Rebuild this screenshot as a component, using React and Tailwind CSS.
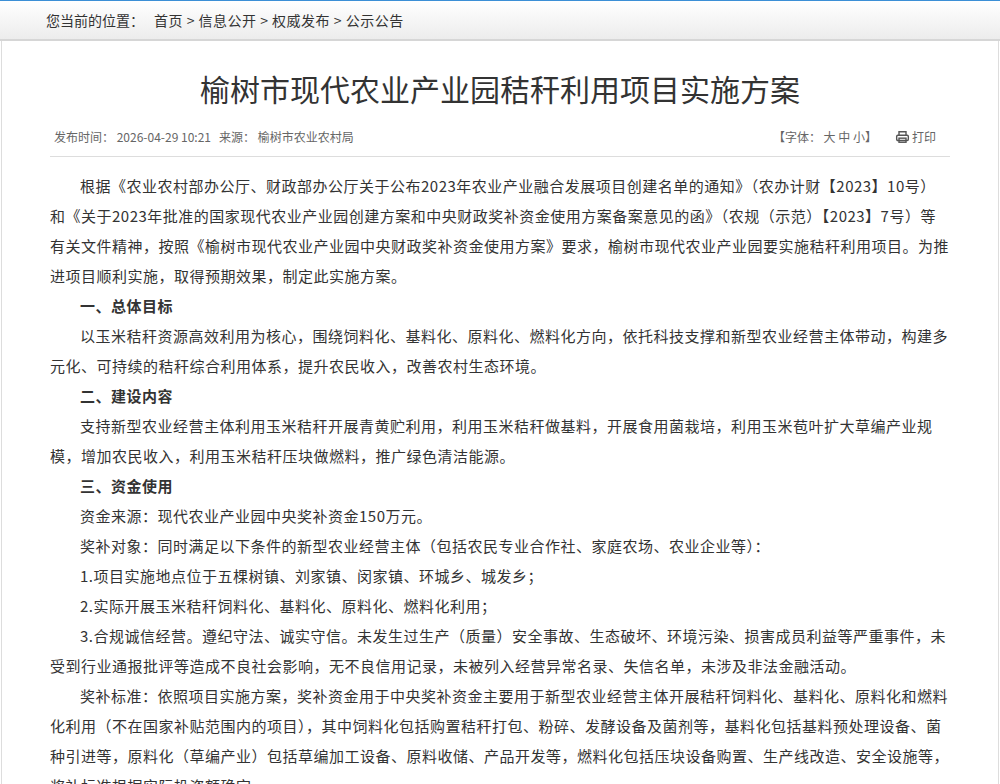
import React from "react";

const paras = [
  { t: "根据《农业农村部办公厅、财政部办公厅关于公布2023年农业产业融合发展项目创建名单的通知》（农办计财【2023】10号）和《关于2023年批准的国家现代农业产业园创建方案和中央财政奖补资金使用方案备案意见的函》（农规（示范）【2023】7号）等有关文件精神，按照《榆树市现代农业产业园中央财政奖补资金使用方案》要求，榆树市现代农业产业园要实施秸秆利用项目。为推进项目顺利实施，取得预期效果，制定此实施方案。" },
  { t: "一、总体目标", b: true },
  { t: "以玉米秸秆资源高效利用为核心，围绕饲料化、基料化、原料化、燃料化方向，依托科技支撑和新型农业经营主体带动，构建多元化、可持续的秸秆综合利用体系，提升农民收入，改善农村生态环境。" },
  { t: "二、建设内容", b: true },
  { t: "支持新型农业经营主体利用玉米秸秆开展青黄贮利用，利用玉米秸秆做基料，开展食用菌栽培，利用玉米苞叶扩大草编产业规模，增加农民收入，利用玉米秸秆压块做燃料，推广绿色清洁能源。" },
  { t: "三、资金使用", b: true },
  { t: "资金来源：现代农业产业园中央奖补资金150万元。" },
  { t: "奖补对象：同时满足以下条件的新型农业经营主体（包括农民专业合作社、家庭农场、农业企业等）：" },
  { t: "1.项目实施地点位于五棵树镇、刘家镇、闵家镇、环城乡、城发乡；" },
  { t: "2.实际开展玉米秸秆饲料化、基料化、原料化、燃料化利用；" },
  { t: "3.合规诚信经营。遵纪守法、诚实守信。未发生过生产（质量）安全事故、生态破坏、环境污染、损害成员利益等严重事件，未受到行业通报批评等造成不良社会影响，无不良信用记录，未被列入经营异常名录、失信名单，未涉及非法金融活动。" },
  { t: "奖补标准：依照项目实施方案，奖补资金用于中央奖补资金主要用于新型农业经营主体开展秸秆饲料化、基料化、原料化和燃料化利用（不在国家补贴范围内的项目），其中饲料化包括购置秸秆打包、粉碎、发酵设备及菌剂等，基料化包括基料预处理设备、菌种引进等，原料化（草编产业）包括草编加工设备、原料收储、产品开发等，燃料化包括压块设备购置、生产线改造、安全设施等，奖补标准根据实际投资额确定。" },
];

export default function App() {
  return (
    <div className="w-[1000px] h-[784px] overflow-hidden bg-white border-t border-[#3c8fd6]" style={{ fontFamily: '"Microsoft YaHei","Noto Sans CJK SC",sans-serif' }}>
      <div className="h-[40px] bg-gradient-to-b from-white to-[#ececec] border-b-2 border-[#d6d6d6] flex items-center pl-[46px] text-[14px] text-[#333]">
        您当前的位置：<span className="ml-[10px] tracking-[0.5px]">首页 &gt; 信息公开 &gt; 权威发布 &gt; 公示公告</span>
      </div>
      <div className="mx-[1px] border-x border-[#ddd] h-full">
        <div className="w-[900px] mx-auto">
          <h1 className="text-center text-[30px] text-[#333] pt-[27px] leading-[40px]">榆树市现代农业产业园秸秆利用项目实施方案</h1>
          <div className="flex justify-between items-center mt-[20px] pb-[10px] border-b border-[#ddd] text-[12px] text-[#666] px-[4px]">
            <div>发布时间：&nbsp;2026-04-29 10:21&nbsp;&nbsp;&nbsp;来源：&nbsp;榆树市农业农村局</div>
            <div className="flex items-center gap-[18px] pr-[10px]">
              <span>【字体：&nbsp;大 中 小】</span>
              <span className="flex items-center gap-[2px]">
                <svg width="15" height="14" viewBox="0 0 24 24" fill="none" stroke="#555" strokeWidth="2.4"><path d="M6 9V3h12v6"/><rect x="2" y="9" width="20" height="9" rx="2"/><rect x="6" y="14" width="12" height="7"/></svg>
                打印
              </span>
            </div>
          </div>
          <div className="pt-[14px] text-[15px] leading-[30px] text-[#333] tracking-[0.5px]">
            {paras.map((p, i) => (
              <p key={i} className={"indent-[30px] " + (p.b ? "font-bold" : "")}>{p.t}</p>
            ))}
          </div>
        </div>
      </div>
    </div>
  );
}
